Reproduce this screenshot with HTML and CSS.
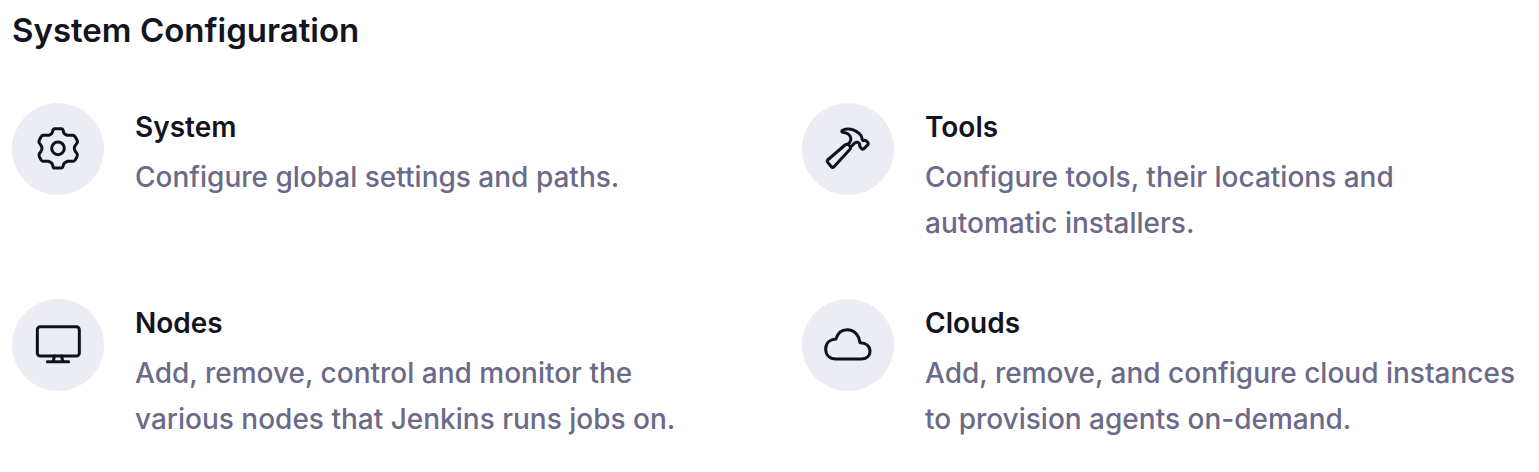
FILE: index.html
```html
<!DOCTYPE html>
<html lang="en">
<head>
<meta charset="utf-8">
<title>System Configuration</title>
<link rel="stylesheet" href="styles.css">
</head>
<body>
<main class="section">
  <h2 class="section-title">System Configuration</h2>
  <div class="items">
    <a class="item" href="#system">
      <span class="item-icon">
        <svg viewBox="102 105 144 144" aria-hidden="true">
          <path d="M164 116H184Q188 116 189 120L191 127Q192 131 196 133L202 136H218Q223 136 226 141L231 150Q234 155 231 159L226 166Q223 170 223 175Q223 180 226 184L231 191Q234 196 231 200L226 209Q223 214 218 214H202L196 217Q192 219 191 223L189 229Q187 234 183 234H164Q160 234 159 229L157 223Q156 219 152 217L146 214H130Q126 214 123 209L118 200Q116 196 118 191L123 184Q126 180 126 175Q126 170 123 166L118 159Q116 155 118 150L123 141Q126 136 130 136H146L152 133Q156 131 157 127L159 120Q160 116 164 116Z"/>
          <circle cx="174" cy="175" r="19"/>
        </svg>
      </span>
      <span class="item-text">
        <span class="item-name">System</span>
        <span class="item-description">Configure global settings and paths.</span>
      </span>
    </a>
    <a class="item" href="#tools">
      <span class="item-icon">
        <svg viewBox="102 105 144 144" aria-hidden="true">
          <path d="M165 165L113 210Q110 213 113 217L124 230Q128 234 132 230L180 178Q184 173 179 168L176 165Q171 161 165 165Z"/>
          <path d="M174 163L180 156Q184 150 182 143Q178 129 158 127Q154 126 156 122Q162 117 174 117Q192 117 208 131Q216 138 216 145Q215 150 219 152L224 151Q227 151 229 153L234 158Q236 161 234 164L222 176Q218 179 215 176L210 170Q208 168 209 164Q209 159 203 157Q198 156 193 160L182 171"/>
        </svg>
      </span>
      <span class="item-text">
        <span class="item-name">Tools</span>
        <span class="item-description">Configure tools, their locations and automatic installers.</span>
      </span>
    </a>
    <a class="item" href="#nodes">
      <span class="item-icon">
        <svg viewBox="102 108 144 144" aria-hidden="true">
          <rect x="112" y="125" width="126" height="88" rx="9"/>
          <path d="M163 213L160 229M185 213L188 229M142 230H206"/>
        </svg>
      </span>
      <span class="item-text">
        <span class="item-name">Nodes</span>
        <span class="item-description">Add, remove, control and monitor the various nodes that Jenkins runs jobs on.</span>
      </span>
    </a>
    <a class="item" href="#clouds">
      <span class="item-icon">
        <svg viewBox="102 108 144 144" aria-hidden="true">
          <path d="M138 162C143 144 155 134 172 134C192 134 207 150 210 173C228 174 240 184 240 198C240 213 229 222 214 222H138C119 222 107 210 107 192C107 174 120 163 138 162Z"/>
        </svg>
      </span>
      <span class="item-text">
        <span class="item-name">Clouds</span>
        <span class="item-description">Add, remove, and configure cloud instances to provision agents on-demand.</span>
      </span>
    </a>
  </div>
</main>
</body>
</html>
```
FILE: styles.css
```css
body {
  margin: 0;
  background: #fff;
  color: #14141f;
  font-family: Inter, "Noto Sans", sans-serif;
}

.section {
  padding: 8px 20px 24px 12px;
}

.section-title {
  margin: 0 0 51px;
  font-size: 33px;
  font-weight: 600;
  line-height: 44px;
}

.items {
  display: grid;
  grid-template-columns: 1fr 1fr;
  gap: 53px 73px;
}

.item {
  display: flex;
  align-items: flex-start;
  gap: 31px;
  color: inherit;
  text-decoration: none;
}

.item-icon {
  display: flex;
  flex: none;
  align-items: center;
  justify-content: center;
  width: 92px;
  height: 92px;
  border-radius: 50%;
  background: #ececf5;
}

.item-icon svg {
  width: 48px;
  height: 48px;
  fill: none;
  stroke: #10101c;
  stroke-width: 9;
  stroke-linecap: round;
  stroke-linejoin: round;
}

.item-text {
  display: flex;
  flex: 1;
  flex-direction: column;
}

.item-name {
  font-size: 28px;
  font-weight: 600;
  line-height: 48px;
}

.item-description {
  margin-top: 3px;
  color: #6b6a88;
  font-size: 28px;
  font-weight: 500;
  line-height: 46px;
}
```
